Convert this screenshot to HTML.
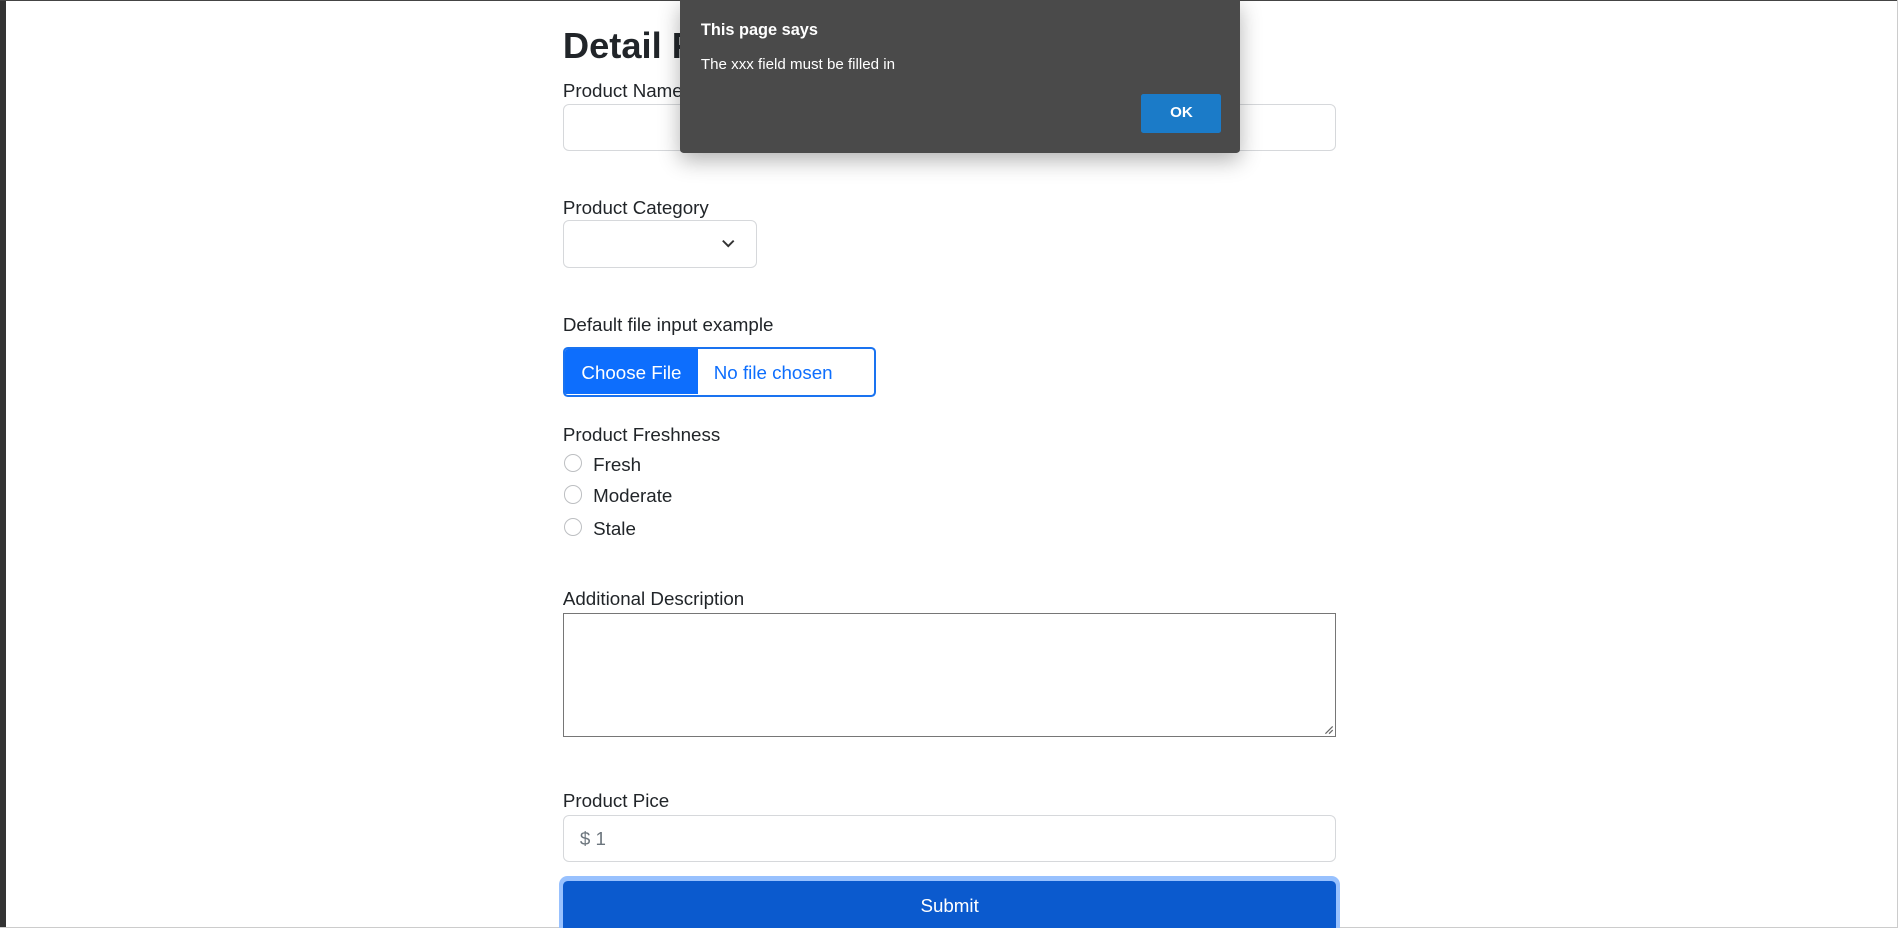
<!DOCTYPE html>
<html><head><meta charset="utf-8"><style>
html,body{margin:0;padding:0;background:#fff;overflow:hidden}
#w{zoom:1.2105;position:relative;width:1568px;height:767px;font-family:"Liberation Sans",sans-serif;color:#212529;overflow:hidden}
.a{position:absolute}
.lbl{font-size:15.5px;line-height:18px}
.inp{border:1px solid #d6d8db;border-radius:5px;background:#fff;box-sizing:border-box}
.radio{width:15px;height:15px;border:1px solid #bdbfc2;border-radius:50%;box-sizing:border-box}
</style></head><body><div id="w">
<div class="a" style="left:0;top:0;width:5px;height:767px;background:#333"></div>
<div class="a" style="left:0;top:0;width:1568px;height:1px;background:#444"></div>
<div class="a" style="right:0;top:0;width:1px;height:767px;background:#ccc"></div>
<div class="a" style="left:0;bottom:0;width:1568px;height:1px;background:#ccc"></div>

<div class="a" style="left:465px;top:19px;font-size:30px;font-weight:bold;line-height:38px">Detail Product</div>
<div class="a lbl" style="left:465px;top:66px">Product Name</div>
<div class="a inp" style="left:465px;top:86px;width:639px;height:39px"></div>

<div class="a lbl" style="left:465px;top:163px">Product Category</div>
<div class="a inp" style="left:465px;top:182px;width:160px;height:39px"></div>
<svg class="a" style="left:596px;top:196px" width="12" height="10" viewBox="0 0 12 10"><path d="M1.5 3 L6 7.5 L10.5 3" fill="none" stroke="#333" stroke-width="1.6"/></svg>

<div class="a lbl" style="left:465px;top:259px">Default file input example</div>
<div class="a" style="left:465px;top:287px;width:259px;height:41px;border:2px solid #1a73f0;border-radius:4px;box-sizing:border-box;overflow:hidden">
<div class="a" style="left:0;top:0;width:110px;height:37px;background:#0d6efd;color:#fff;font-size:15.5px;line-height:39px;text-align:center">Choose File</div>
<div class="a" style="left:123px;top:0;color:#0d6efd;font-size:15.5px;line-height:39px">No file chosen</div>
</div>

<div class="a lbl" style="left:465px;top:350px">Product Freshness</div>
<div class="a radio" style="left:466px;top:375px"></div><div class="a lbl" style="left:490px;top:375px">Fresh</div>
<div class="a radio" style="left:466px;top:401px"></div><div class="a lbl" style="left:490px;top:401px">Moderate</div>
<div class="a radio" style="left:466px;top:428px"></div><div class="a lbl" style="left:490px;top:428px">Stale</div>

<div class="a lbl" style="left:465px;top:486px">Additional Description</div>
<div class="a" style="left:465px;top:506px;width:639px;height:103px;border:1px solid #767676;box-sizing:border-box"></div>
<svg class="a" style="left:1093px;top:598px" width="9" height="9"><path d="M8 2 L2 8 M8 5 L5 8" stroke="#666" stroke-width="1"/></svg>

<div class="a lbl" style="left:465px;top:653px">Product Pice</div>
<div class="a inp" style="left:465px;top:673px;width:639px;height:39px"></div>
<div class="a lbl" style="left:479px;top:684px;color:#6c757d">$ 1</div>

<div class="a" style="left:462px;top:724px;width:645px;height:50px;background:#98c1fe;border-radius:7px"></div>
<div class="a" style="left:465px;top:728px;width:639px;height:44px;background:#0b5ace;border-radius:4px;color:#fff;font-size:15.5px;line-height:41px;text-align:center">Submit</div>

<div class="a" style="left:562px;top:0;width:462px;height:126px;background:#4a4a4a;border-radius:0 0 3px 3px;box-shadow:0 6px 18px rgba(0,0,0,.3)">
<div class="a" style="left:17px;top:17px;color:#fff;font-size:13.5px;font-weight:bold">This page says</div>
<div class="a" style="left:17px;top:46px;color:#fff;font-size:12.5px">The xxx field must be filled in</div>
<div class="a" style="left:381px;top:78px;width:66px;height:32px;background:#1b7bc8;border-radius:2px;color:#fff;font-size:12.5px;font-weight:bold;line-height:32px;text-align:center">OK</div>
</div>
</div></body></html>
